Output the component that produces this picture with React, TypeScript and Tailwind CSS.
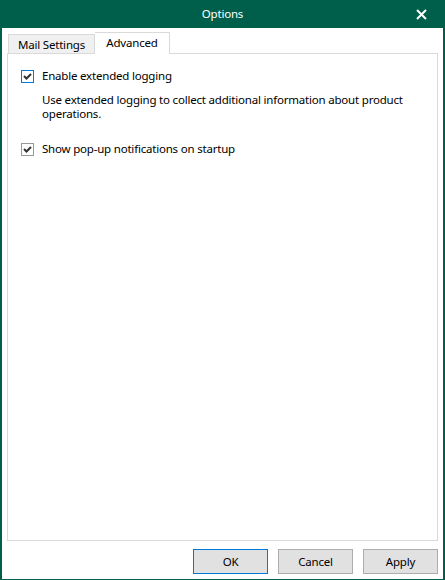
import React from 'react';

const font = { fontFamily: '"Noto Sans", "Open Sans", Arial, sans-serif' };

interface CheckProps {
  label: string;
  checked: boolean;
  focused?: boolean;
}

const CheckRow: React.FC<CheckProps> = ({ label, checked, focused }) => (
  <div className="flex items-center h-[16px]">
    <div
      className={`w-[13px] h-[13px] border bg-white flex items-center justify-center ${
        focused ? 'border-[#0078D7]' : 'border-[#999999]'
      }`}
    >
      {checked && (
        <svg width="9" height="7" viewBox="0 0 9 7">
          <path d="M1 3 L3.5 5.5 L8 1" stroke="#333333" strokeWidth="2" fill="none" />
        </svg>
      )}
    </div>
    <span className="ml-[8px] text-[11.5px] tracking-[-0.2px] text-black leading-[16px]">{label}</span>
  </div>
);

const App: React.FC = () => {
  return (
    <div
      className="w-[445px] h-[580px] bg-[#005F4B] flex flex-col px-[2px] pb-[1px]"
      style={font}
    >
      {/* title bar */}
      <div className="h-[28px] -mx-[2px] flex items-center justify-center relative shrink-0">
        <span className="text-white text-[11.5px] tracking-[-0.2px]">Options</span>
        <svg
          className="absolute left-[416px] top-[9px]"
          width="11"
          height="11"
          viewBox="0 0 11 11"
        >
          <path d="M1 1 L10 10 M10 1 L1 10" stroke="#ffffff" strokeWidth="2" />
        </svg>
      </div>

      <div className="flex-1 bg-white flex flex-col px-[5px] pb-[5px]">
        {/* tabs */}
        <div className="h-[25px] flex items-end pl-[1px] shrink-0 text-[11.5px] tracking-[-0.2px]">
          <div className="h-[19px] w-[87px] bg-[#F0F0F0] border border-b-0 border-[#D9D9D9] flex items-center justify-center text-black pt-[1px]">
            Mail Settings
          </div>
          <div className="h-[22px] w-[75px] -mb-px relative z-10 bg-white border border-b-0 border-[#D9D9D9] border-l-0 flex items-center justify-center text-black pb-[1px]">
            Advanced
          </div>
        </div>

        {/* panel */}
        <div className="flex-1 border border-[#D9D9D9] pl-[13px] pt-[14px]">
          <CheckRow label="Enable extended logging" checked focused />
          <p className="ml-[21px] mt-[9px] text-[11.5px] tracking-[-0.2px] leading-[14px] text-black">
            Use extended logging to collect additional information about product
            <br />
            operations.
          </p>
          <div className="mt-[20px]">
            <CheckRow label="Show pop-up notifications on startup" checked />
          </div>
        </div>

        {/* buttons */}
        <div className="mt-[8px] flex justify-end gap-[10px] shrink-0 text-[11.5px] tracking-[-0.2px]">
          <button className="w-[75px] h-[25px] bg-[#E1E1E1] border border-[#0078D7] text-black">
            OK
          </button>
          <button className="w-[75px] h-[25px] bg-[#E1E1E1] border border-[#ADADAD] text-black">
            Cancel
          </button>
          <button className="w-[75px] h-[25px] bg-[#E1E1E1] border border-[#ADADAD] text-black">
            Apply
          </button>
        </div>
      </div>
    </div>
  );
};

export default App;
